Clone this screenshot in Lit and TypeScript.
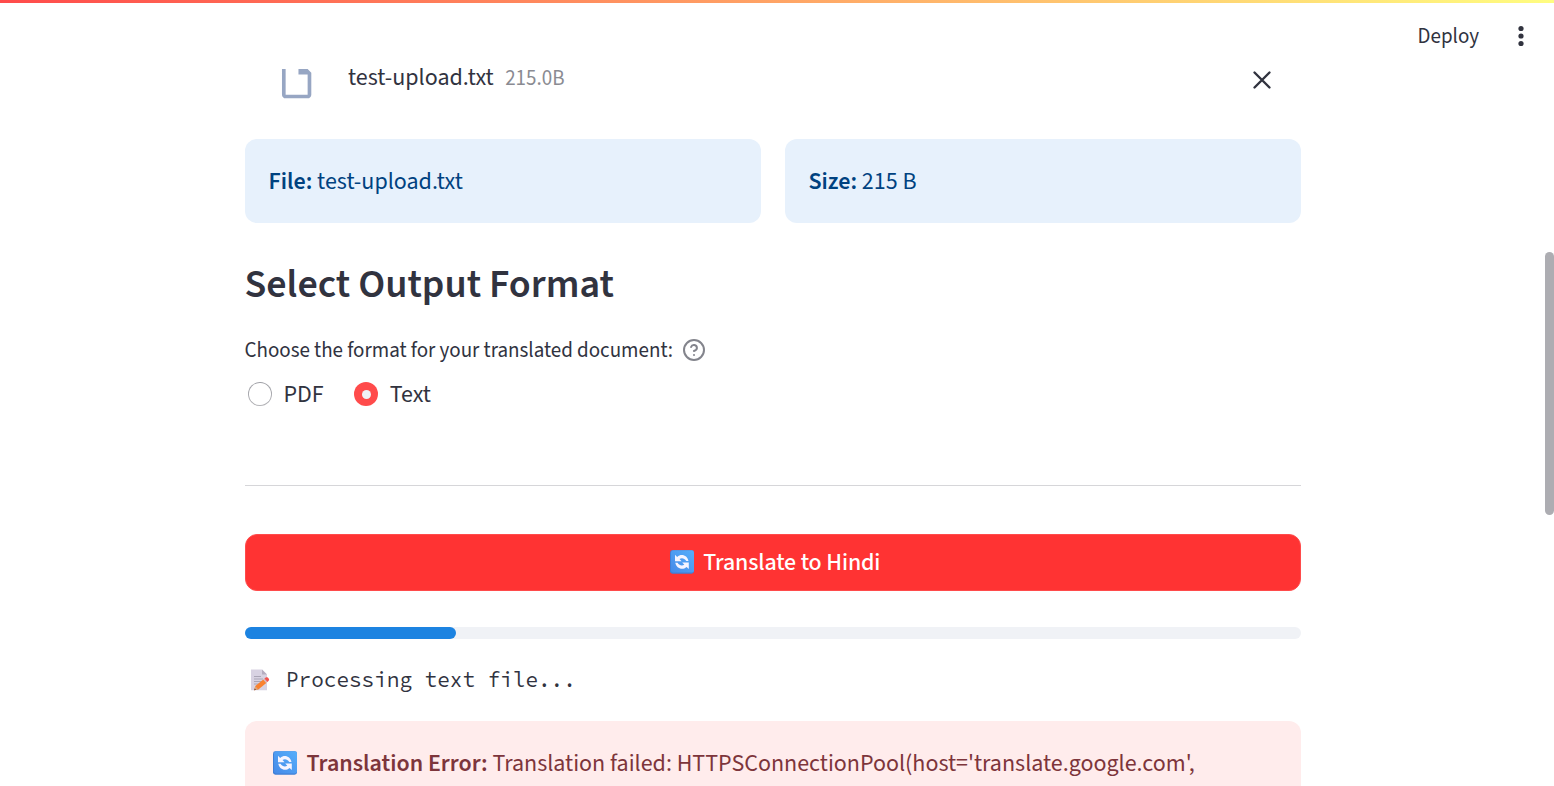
import { LitElement, html, css } from "lit";
import { customElement, property, state } from "lit/decorators.js";

const refreshEmoji = html`<svg class="emoji" viewBox="0 0 24 24" width="24" height="24" aria-hidden="true">
  <defs>
    <linearGradient id="tile" x1="1" y1="0" x2="0" y2="1">
      <stop offset="0" stop-color="#56aefb" />
      <stop offset="1" stop-color="#468ae8" />
    </linearGradient>
  </defs>
  <rect x="0" y="0.3" width="24" height="23.4" rx="2.4" fill="#3f7fd6" />
  <rect x="1" y="0.3" width="23" height="22.2" rx="2.2" fill="url(#tile)" />
  <path d="M5 4.800v6.400h6.600L9.500 9.100c2.200-1.500 4.800-1 6.800 1.900h2.200C17.500 5.400 11.400 3 7.200 6.900z" fill="#f6f4ff" />
  <path d="M18.800 19v-6.400h-6.600l2.100 2.100c-2.200 1.500-4.800 1-6.800-1.900H5.300c1 5.600 7.100 8 11.300 4.100z" fill="#f6f4ff" />
</svg>`;

const memoEmoji = html`<svg class="memo" viewBox="0 0 20 22" width="20" height="22" aria-hidden="true">
  <path d="M1 .5h11l5 5V21.300H1z" fill="#d8d2e2" />
  <path d="M12 .5l5 5h-5z" fill="#b5adc0" />
  <path d="M4 7.500h7M4 10h9M4 12.500h8M4 15h5" stroke="#aaa5b6" stroke-width="1.100" />
  <path d="M4.200 21.300l1.100-4.300 8-6.500 3 3.400-8 6.500z" fill="#f9812f" />
  <path d="M4.200 21.300l1.100-4.300 3 3.400z" fill="#dca57c" />
  <path d="M4.200 21.300l.5-1.900 1.400 1.400z" fill="#6a4540" />
  <path d="M13.300 10.500l1.500-1.300 3 3.400-1.500 1.300z" fill="#d9b6b6" />
  <path d="M14.500 9.500l1.300-1.100c1.600-1 4.200 1.600 3 3.100l-1.300 1.400z" fill="#f4524f" />
</svg>`;

@customElement("app-header")
export class AppHeader extends LitElement {
  static styles = css`
    :host {
      display: block;
      height: 69px;
      flex: none;
      background: #fff;
    }
    .decoration {
      height: 3px;
      background: linear-gradient(90deg, #ff4b4b, #fffd80);
    }
    .toolbar {
      display: flex;
      justify-content: flex-end;
      align-items: center;
      height: 66px;
      padding-right: 21px;
      gap: 30px;
      font-size: 21px;
      line-height: 30px;
    }
    svg {
      display: block;
    }
  `;

  render() {
    return html`
      <div class="decoration"></div>
      <div class="toolbar">
        <span>Deploy</span>
        <svg width="24" height="24" viewBox="0 0 24 24" fill="#31333f">
          <circle cx="12" cy="4.500" r="2.600" />
          <circle cx="12" cy="12" r="2.600" />
          <circle cx="12" cy="19.500" r="2.600" />
        </svg>
      </div>
    `;
  }
}

@customElement("radio-option")
export class RadioOption extends LitElement {
  @property() label = "";
  @property({ type: Boolean }) checked = false;

  static styles = css`
    :host {
      display: flex;
      align-items: center;
      gap: 11.5px;
      line-height: 36px;
    }
    .outer {
      display: flex;
      align-items: center;
      justify-content: center;
      width: 24px;
      height: 24px;
      border-radius: 50%;
      background: linear-gradient(#9b9ca2, #b4b4b8);
    }
    .inner {
      width: 21.4px;
      height: 21.4px;
      border-radius: 50%;
      background: #fff;
    }
    .on {
      background: #ff4b4b;
    }
    .on .inner {
      width: 9px;
      height: 9px;
      background: #f0f2f6;
    }
    span {
      padding-top: 1px;
      margin-bottom: -1px;
      margin-right: 0.5px;
    }
  `;

  render() {
    return html`<div class="outer ${this.checked ? "on" : ""}"><div class="inner"></div></div>
      <span>${this.label}</span>`;
  }
}

@customElement("app-root")
export class AppRoot extends LitElement {
  @state() private format = "Text";
  @state() private progress = 20;

  static styles = css`
    :host {
      display: flex;
      flex-direction: column;
      position: relative;
      height: 786px;
      overflow: hidden;
      background: #fff;
      color: #31333f;
      font-family: "Source Sans 3", "Noto Sans CJK SC", sans-serif;
      font-size: 24px;
      line-height: 36px;
    }
    main {
      flex: 1;
      min-height: 0;
      padding: 0 253px 0 245px;
    }
    svg {
      display: block;
      flex: none;
    }
    .file {
      display: flex;
      align-items: center;
      height: 44px;
      margin-top: -11px;
      padding: 0 28px 0 30px;
    }
    .doc {
      clip-path: inset(11px 0 0 0);
    }
    .name {
      margin: 0 11.5px 4px 29px;
    }
    .size {
      flex: 1;
      margin-bottom: 4px;
      font-size: 21px;
      color: #8a8b92;
    }
    .infos {
      display: grid;
      grid-template-columns: 1fr 1fr;
      gap: 24px;
      margin-top: 37px;
    }
    .info {
      padding: 25px 24px 23px 23.5px;
      border-radius: 12px;
      background: #e7f1fc;
      color: #004280;
    }
    b {
      font-weight: 600;
    }
    h3 {
      margin: 38px 0 0 -0.5px;
      font-size: 40px;
      font-weight: 600;
      line-height: 48px;
    }
    .label {
      display: flex;
      align-items: center;
      gap: 8.5px;
      height: 32px;
      margin: 25px 0 0 -0.5px;
      font-size: 21px;
    }
    .radios {
      display: flex;
      gap: 30px;
      margin-top: 10px;
      padding-left: 3px;
    }
    hr {
      height: 1px;
      margin: 73px 0 48px;
      border: 0;
      background: #d6d6d9;
    }
    button {
      display: flex;
      align-items: center;
      justify-content: center;
      gap: 9.5px;
      width: 100%;
      height: 57px;
      padding: 0 0 1px 4px;
      border: 1px solid #ff4b4b;
      border-radius: 12px;
      background: #ff3333;
      color: #fff;
      font: inherit;
      font-weight: 500;
      letter-spacing: -0.12px;
    }
    button span,
    .error b,
    .error span {
      padding-top: 1px;
      margin-bottom: -1px;
    }
    .track {
      height: 12px;
      margin-top: 36px;
      border-radius: 6px;
      background: #f0f2f6;
    }
    .bar {
      height: 12px;
      border-radius: 6px;
      background: #1c83e1;
    }
    .status {
      display: flex;
      align-items: center;
      gap: 16px;
      height: 36px;
      margin-top: 23px;
      padding-left: 5px;
      font-family: "Source Code Pro", "Liberation Mono", monospace;
      font-size: 21px;
    }
    .error {
      display: flex;
      align-items: center;
      margin-top: 23px;
      height: 84px;
      padding-left: 28px;
      border-radius: 12px 12px 0 0;
      background: #ffecec;
      color: #7d353b;
      white-space: pre;
    }
    .error .emoji {
      margin-right: 9.5px;
    }
    .scrollbar {
      position: absolute;
      right: 0;
      top: 252px;
      width: 9px;
      height: 263px;
      border-radius: 4.5px;
      background: #adadb2;
    }
  `;

  render() {
    return html`
      <app-header></app-header>
      <main>
        <div class="file">
          <svg class="doc" width="44" height="44" viewBox="0.200 0 24 24" fill="#97a6c3">
            <path d="M14 2H6c-1.100 0-1.990.9-1.990 2L4 20c0 1.100.89 2 1.990 2H18c1.100 0 2-.9 2-2V8l-6-6zM6 20V4h7v5h5v11H6z" />
          </svg>
          <span class="name">test-upload.txt</span>
          <span class="size">215.0B</span>
          <svg width="22" height="22" viewBox="0 0 22 22" stroke="#31333f" stroke-width="2.400" stroke-linecap="round">
            <path d="M3.500 3.500l15 15M18.500 3.500l-15 15" />
          </svg>
        </div>
        <div class="infos">
          <div class="info"><b>File:</b> test-upload.txt</div>
          <div class="info"><b>Size:</b> 215 B</div>
        </div>
        <h3>Select Output Format</h3>
        <div class="label">
          <span>Choose the format for your translated document:</span>
          <svg width="24" height="24" viewBox="0 0 24 24" fill="none" stroke="#83848c" stroke-width="2" stroke-linecap="round" stroke-linejoin="round">
            <circle cx="12" cy="12" r="10" />
            <path d="M9.090 9a3 3 0 0 1 5.830 1c0 2-3 3-3 3M12 17h.01" />
          </svg>
        </div>
        <div class="radios">
          ${["PDF", "Text"].map(
            (f) => html`<radio-option label=${f} ?checked=${this.format === f}></radio-option>`
          )}
        </div>
        <hr />
        <button>${refreshEmoji}<span>Translate to Hindi</span></button>
        <div class="track"><div class="bar" style="width:${this.progress}%"></div></div>
        <div class="status">${memoEmoji}<span>Processing text file...</span></div>
        <div class="error">${refreshEmoji}<b>Translation Error:</b><span> Translation failed: HTTPSConnectionPool(host='translate.google.com',</span></div>
      </main>
      <div class="scrollbar"></div>
    `;
  }
}
